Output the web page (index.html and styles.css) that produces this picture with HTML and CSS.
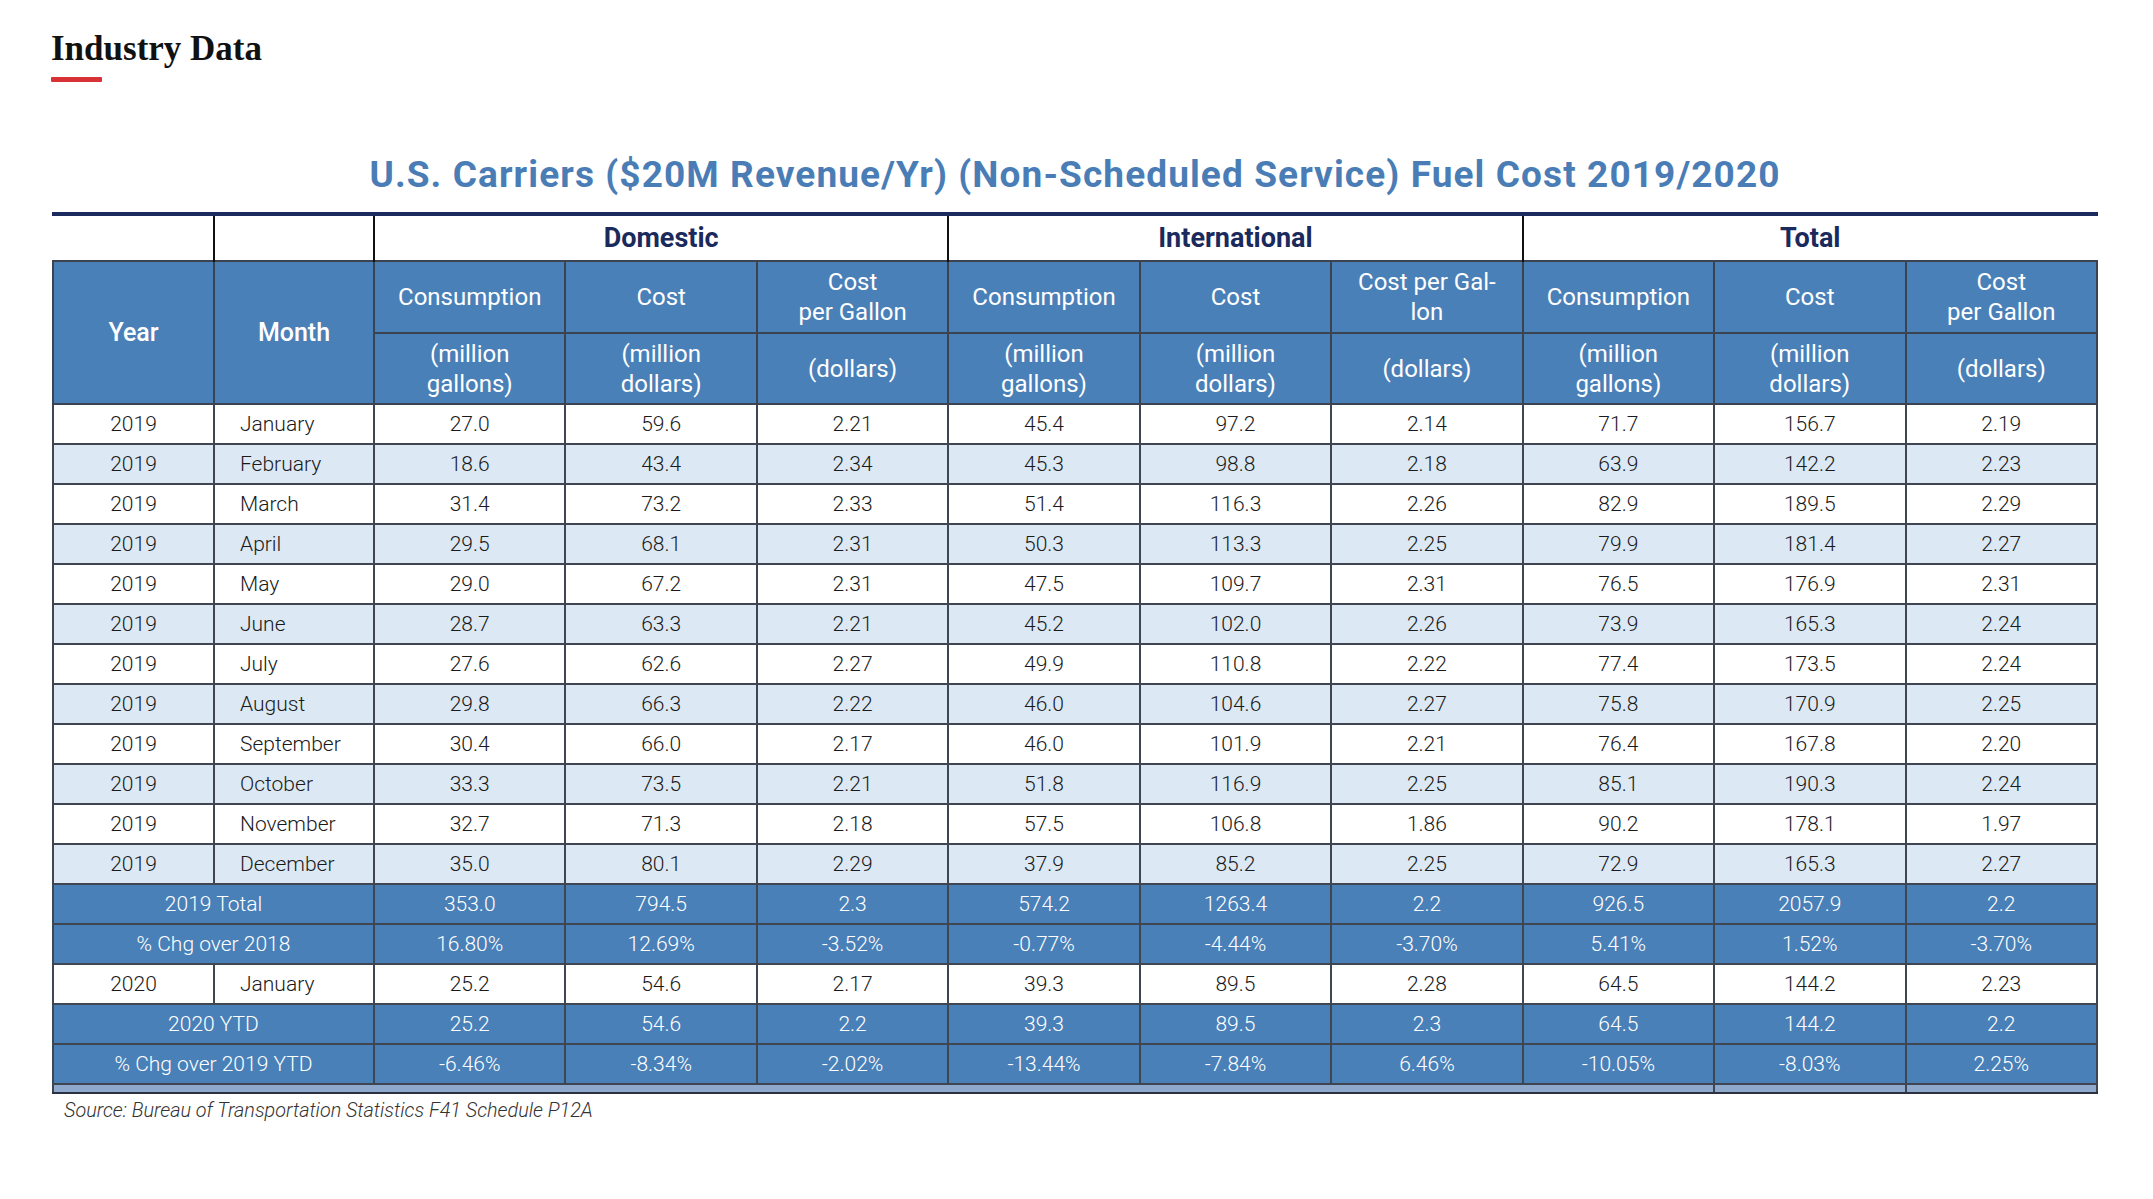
FILE: index.html
```html
<!DOCTYPE html>
<html lang="en">
<head>
<meta charset="utf-8">
<title>Industry Data</title>
<link rel="stylesheet" href="styles.css">
</head>
<body>
<div class="page">
  <h1 class="page-title">Industry Data</h1>
  <div class="accent"></div>
  <div class="report">
    <h2 class="report-title">U.S. Carriers ($20M Revenue/Yr) (Non-Scheduled Service) Fuel Cost 2019/2020</h2>
    <div class="rule"></div>
    <table class="fuel">
      <colgroup>
        <col class="c-year"><col class="c-month">
        <col><col><col><col><col><col><col><col><col>
      </colgroup>
      <thead>
        <tr class="grp">
          <th class="g-blank first"></th>
          <th class="g-blank"></th>
          <th colspan="3">Domestic</th>
          <th colspan="3">International</th>
          <th colspan="3" class="last">Total</th>
        </tr>
        <tr class="h1">
          <th rowspan="2" class="key">Year</th>
          <th rowspan="2" class="key">Month</th>
          <th>Consumption</th><th>Cost</th><th>Cost<br>per Gallon</th>
          <th>Consumption</th><th>Cost</th><th>Cost per Gal-<br>lon</th>
          <th>Consumption</th><th>Cost</th><th>Cost<br>per Gallon</th>
        </tr>
        <tr class="h2">
          <th>(million<br>gallons)</th><th>(million<br>dollars)</th><th>(dollars)</th>
          <th>(million<br>gallons)</th><th>(million<br>dollars)</th><th>(dollars)</th>
          <th>(million<br>gallons)</th><th>(million<br>dollars)</th><th>(dollars)</th>
        </tr>
      </thead>
      <tbody>
        <tr><td>2019</td><td class="mo">January</td><td>27.0</td><td>59.6</td><td>2.21</td><td>45.4</td><td>97.2</td><td>2.14</td><td>71.7</td><td>156.7</td><td>2.19</td></tr>
        <tr class="alt"><td>2019</td><td class="mo">February</td><td>18.6</td><td>43.4</td><td>2.34</td><td>45.3</td><td>98.8</td><td>2.18</td><td>63.9</td><td>142.2</td><td>2.23</td></tr>
        <tr><td>2019</td><td class="mo">March</td><td>31.4</td><td>73.2</td><td>2.33</td><td>51.4</td><td>116.3</td><td>2.26</td><td>82.9</td><td>189.5</td><td>2.29</td></tr>
        <tr class="alt"><td>2019</td><td class="mo">April</td><td>29.5</td><td>68.1</td><td>2.31</td><td>50.3</td><td>113.3</td><td>2.25</td><td>79.9</td><td>181.4</td><td>2.27</td></tr>
        <tr><td>2019</td><td class="mo">May</td><td>29.0</td><td>67.2</td><td>2.31</td><td>47.5</td><td>109.7</td><td>2.31</td><td>76.5</td><td>176.9</td><td>2.31</td></tr>
        <tr class="alt"><td>2019</td><td class="mo">June</td><td>28.7</td><td>63.3</td><td>2.21</td><td>45.2</td><td>102.0</td><td>2.26</td><td>73.9</td><td>165.3</td><td>2.24</td></tr>
        <tr><td>2019</td><td class="mo">July</td><td>27.6</td><td>62.6</td><td>2.27</td><td>49.9</td><td>110.8</td><td>2.22</td><td>77.4</td><td>173.5</td><td>2.24</td></tr>
        <tr class="alt"><td>2019</td><td class="mo">August</td><td>29.8</td><td>66.3</td><td>2.22</td><td>46.0</td><td>104.6</td><td>2.27</td><td>75.8</td><td>170.9</td><td>2.25</td></tr>
        <tr><td>2019</td><td class="mo">September</td><td>30.4</td><td>66.0</td><td>2.17</td><td>46.0</td><td>101.9</td><td>2.21</td><td>76.4</td><td>167.8</td><td>2.20</td></tr>
        <tr class="alt"><td>2019</td><td class="mo">October</td><td>33.3</td><td>73.5</td><td>2.21</td><td>51.8</td><td>116.9</td><td>2.25</td><td>85.1</td><td>190.3</td><td>2.24</td></tr>
        <tr><td>2019</td><td class="mo">November</td><td>32.7</td><td>71.3</td><td>2.18</td><td>57.5</td><td>106.8</td><td>1.86</td><td>90.2</td><td>178.1</td><td>1.97</td></tr>
        <tr class="alt"><td>2019</td><td class="mo">December</td><td>35.0</td><td>80.1</td><td>2.29</td><td>37.9</td><td>85.2</td><td>2.25</td><td>72.9</td><td>165.3</td><td>2.27</td></tr>
        <tr class="sum"><td colspan="2">2019 Total</td><td>353.0</td><td>794.5</td><td>2.3</td><td>574.2</td><td>1263.4</td><td>2.2</td><td>926.5</td><td>2057.9</td><td>2.2</td></tr>
        <tr class="sum"><td colspan="2">% Chg over 2018</td><td>16.80%</td><td>12.69%</td><td>-3.52%</td><td>-0.77%</td><td>-4.44%</td><td>-3.70%</td><td>5.41%</td><td>1.52%</td><td>-3.70%</td></tr>
        <tr><td>2020</td><td class="mo">January</td><td>25.2</td><td>54.6</td><td>2.17</td><td>39.3</td><td>89.5</td><td>2.28</td><td>64.5</td><td>144.2</td><td>2.23</td></tr>
        <tr class="sum"><td colspan="2">2020 YTD</td><td>25.2</td><td>54.6</td><td>2.2</td><td>39.3</td><td>89.5</td><td>2.3</td><td>64.5</td><td>144.2</td><td>2.2</td></tr>
        <tr class="sum"><td colspan="2">% Chg over 2019 YTD</td><td>-6.46%</td><td>-8.34%</td><td>-2.02%</td><td>-13.44%</td><td>-7.84%</td><td>6.46%</td><td>-10.05%</td><td>-8.03%</td><td>2.25%</td></tr>
        <tr class="strip"><td colspan="9"></td><td></td><td></td></tr>
      </tbody>
    </table>
    <p class="source">Source: Bureau of Transportation Statistics F41 Schedule P12A</p>
  </div>
</div>
</body>
</html>
```

FILE: styles.css
```css
html, body {
  margin: 0;
  padding: 0;
  background: #ffffff;
}

.page {
  padding: 29px 0 0 51px;
}

.page-title {
  margin: 0;
  font-family: "Liberation Serif", "Times New Roman", serif;
  font-weight: 700;
  font-size: 35px;
  line-height: 40px;
  color: #111111;
}

.accent {
  margin-top: 8px;
  width: 51px;
  height: 5px;
  border-radius: 1px;
  background: #d93236;
}

.report {
  width: 2046px;
  margin-left: 1px;
}

.report-title {
  margin: 71px 0 0 0;
  text-align: center;
  font-family: Roboto, "Liberation Sans", sans-serif;
  font-weight: 700;
  font-size: 37px;
  letter-spacing: 1.1px;
  line-height: 44px;
  color: #4a7db5;
}

.rule {
  margin-top: 15px;
  height: 4px;
  background: #1b2a5c;
}

.fuel {
  width: 2046px;
  table-layout: fixed;
  border-collapse: collapse;
  font-family: Roboto, "Liberation Sans", sans-serif;
}

.c-year { width: 161px; }
.c-month { width: 160px; }

.fuel th,
.fuel td {
  padding: 0;
  text-align: center;
  vertical-align: middle;
}

/* group header row */
.grp th {
  height: 44px;
  background: #ffffff;
  font-size: 27px;
  font-weight: 700;
  color: #1b2a5c;
  border-left: 2px solid #111111;
  border-right: 2px solid #111111;
}
.grp th.first { border-left: none; }
.grp th.last { border-right: none; }

/* blue header rows */
.h1 th,
.h2 th {
  background: #4a80b8;
  color: #ffffff;
  font-size: 24px;
  font-weight: 400;
  line-height: 30px;
  border: 2px solid #3c4350;
}
.h1 th { height: 70px; }
.h2 th { height: 69px; }
.h1 th.key {
  font-size: 25px;
  font-weight: 500;
}

/* body rows */
.fuel tbody td {
  height: 38px;
  font-size: 21px;
  font-weight: 300;
  color: #1a1a1a;
  border: 2px solid #3f4652;
  background: #ffffff;
}
.fuel tbody tr.alt td { background: #dce9f5; }
.fuel tbody td.mo {
  text-align: left;
  padding-left: 25px;
}
.fuel tbody tr.sum td {
  background: #4a80b8;
  color: #ffffff;
}
.fuel tbody tr.strip td {
  height: 7px;
  background: #8fa9cc;
  border-bottom: 2px solid #2b3140;
}

.source {
  margin: 5px 0 0 0;
  padding-left: 12px;
  font-family: Roboto, "Liberation Sans", sans-serif;
  font-style: italic;
  font-weight: 300;
  font-size: 19.8px;
  line-height: 24px;
  color: #333333;
}
```
